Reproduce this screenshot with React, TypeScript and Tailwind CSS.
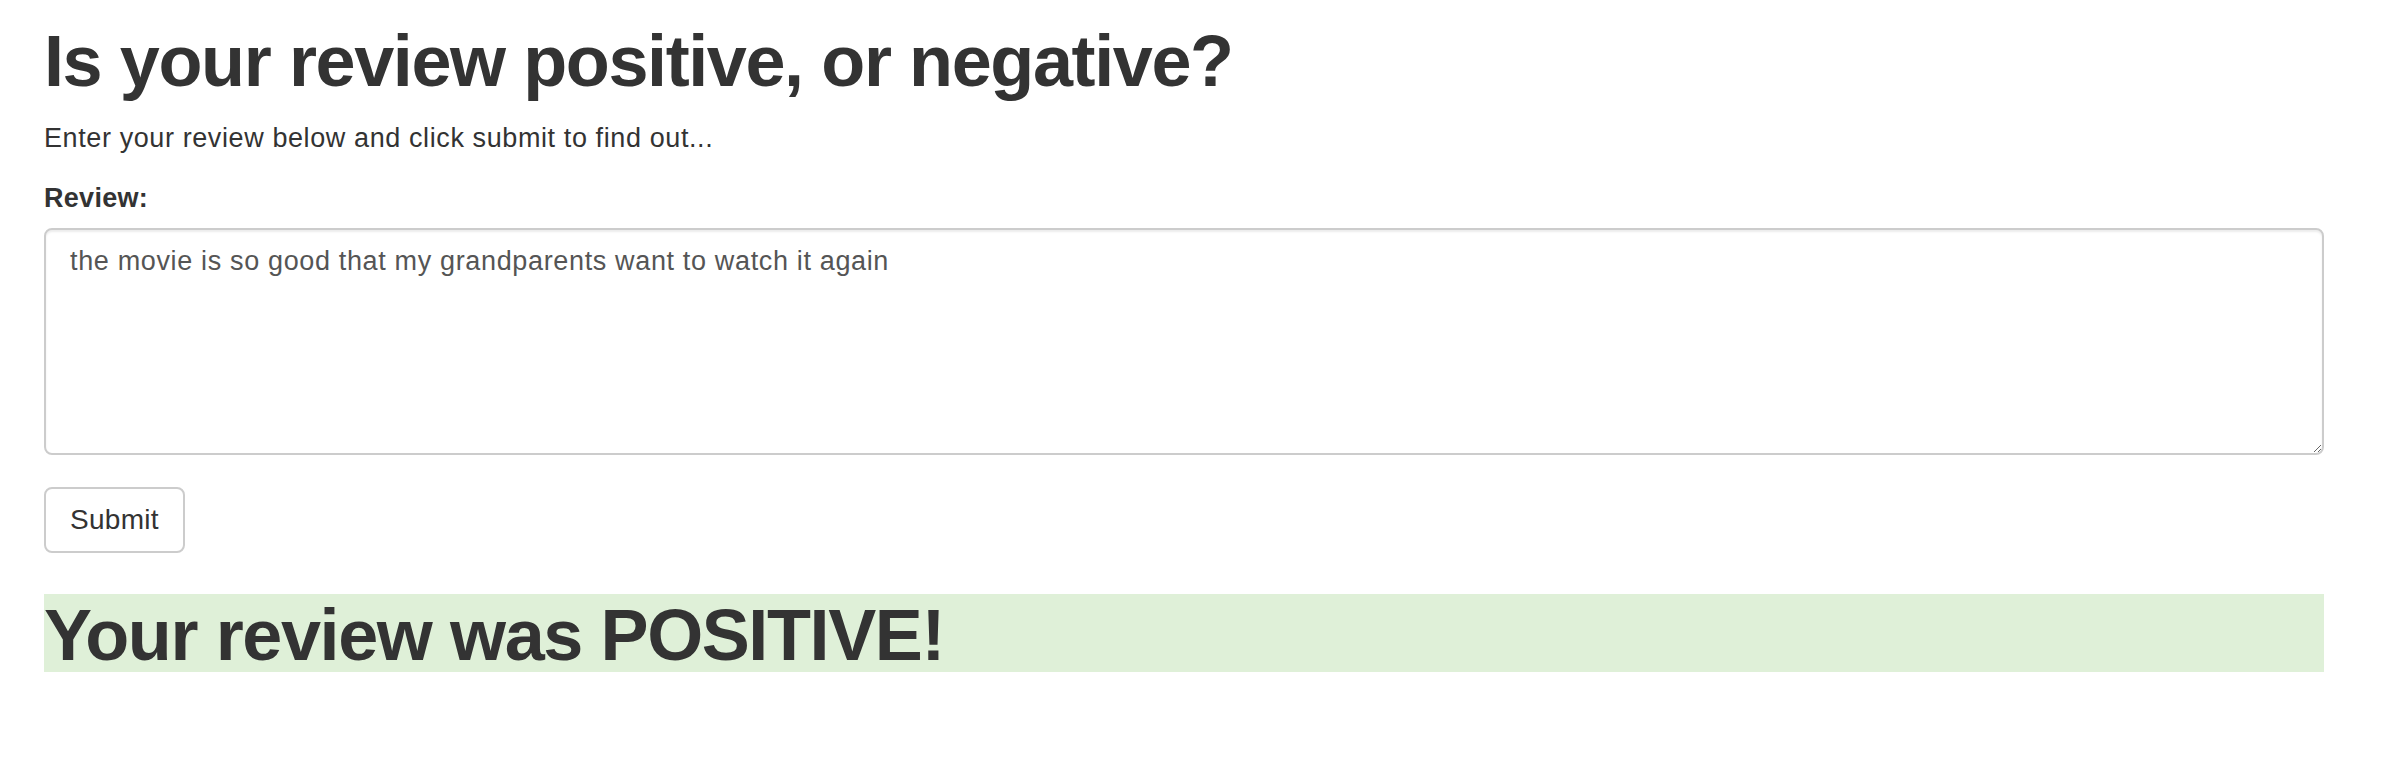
import React from 'react';

const font = { fontFamily: '"Liberation Sans", Arial, Helvetica, sans-serif' };

export default function App() {
  const review = 'the movie is so good that my grandparents want to watch it again';

  return (
    <div className="min-h-screen bg-white text-[#333] pl-[44px] pr-[60px] pt-[22px]" style={font}>
      {/* heading */}
      <h1 className="text-[72px] leading-[79px] font-bold tracking-[-1.4px]">
        Is your review positive, or negative?
      </h1>
      <p className="mt-[19px] text-[27px] leading-[37px] tracking-[0.6px]">
        Enter your review below and click submit to find out...
      </p>

      <form className="mt-[23px]" onSubmit={e => e.preventDefault()}>
        <label htmlFor="review" className="block text-[27px] leading-[37px] font-bold tracking-[0.3px]">
          Review:
        </label>
        <textarea
          id="review"
          defaultValue={review}
          className="mt-[11px] block w-full h-[227px] rounded-[8px] border-2 border-[#ccc] bg-white pt-[13px] pl-[24px] pr-[24px] text-[27px] leading-[37px] tracking-[0.65px] text-[#555] shadow-[inset_0_2px_2px_rgba(0,0,0,0.075)] outline-none"
          style={font}
        />
        <button
          type="submit"
          className="mt-[32px] flex h-[66px] items-center rounded-[8px] border-2 border-[#ccc] bg-white px-[24px] text-[28px] tracking-[0.3px] text-[#333]"
        >
          Submit
        </button>
      </form>

      {/* result */}
      <h1 className="mt-[41px] h-[78px] bg-[#dff0d8] pt-[2px] text-[72px] leading-[78px] font-bold tracking-[-1.4px]">
        Your review was POSITIVE!
      </h1>
    </div>
  );
}
